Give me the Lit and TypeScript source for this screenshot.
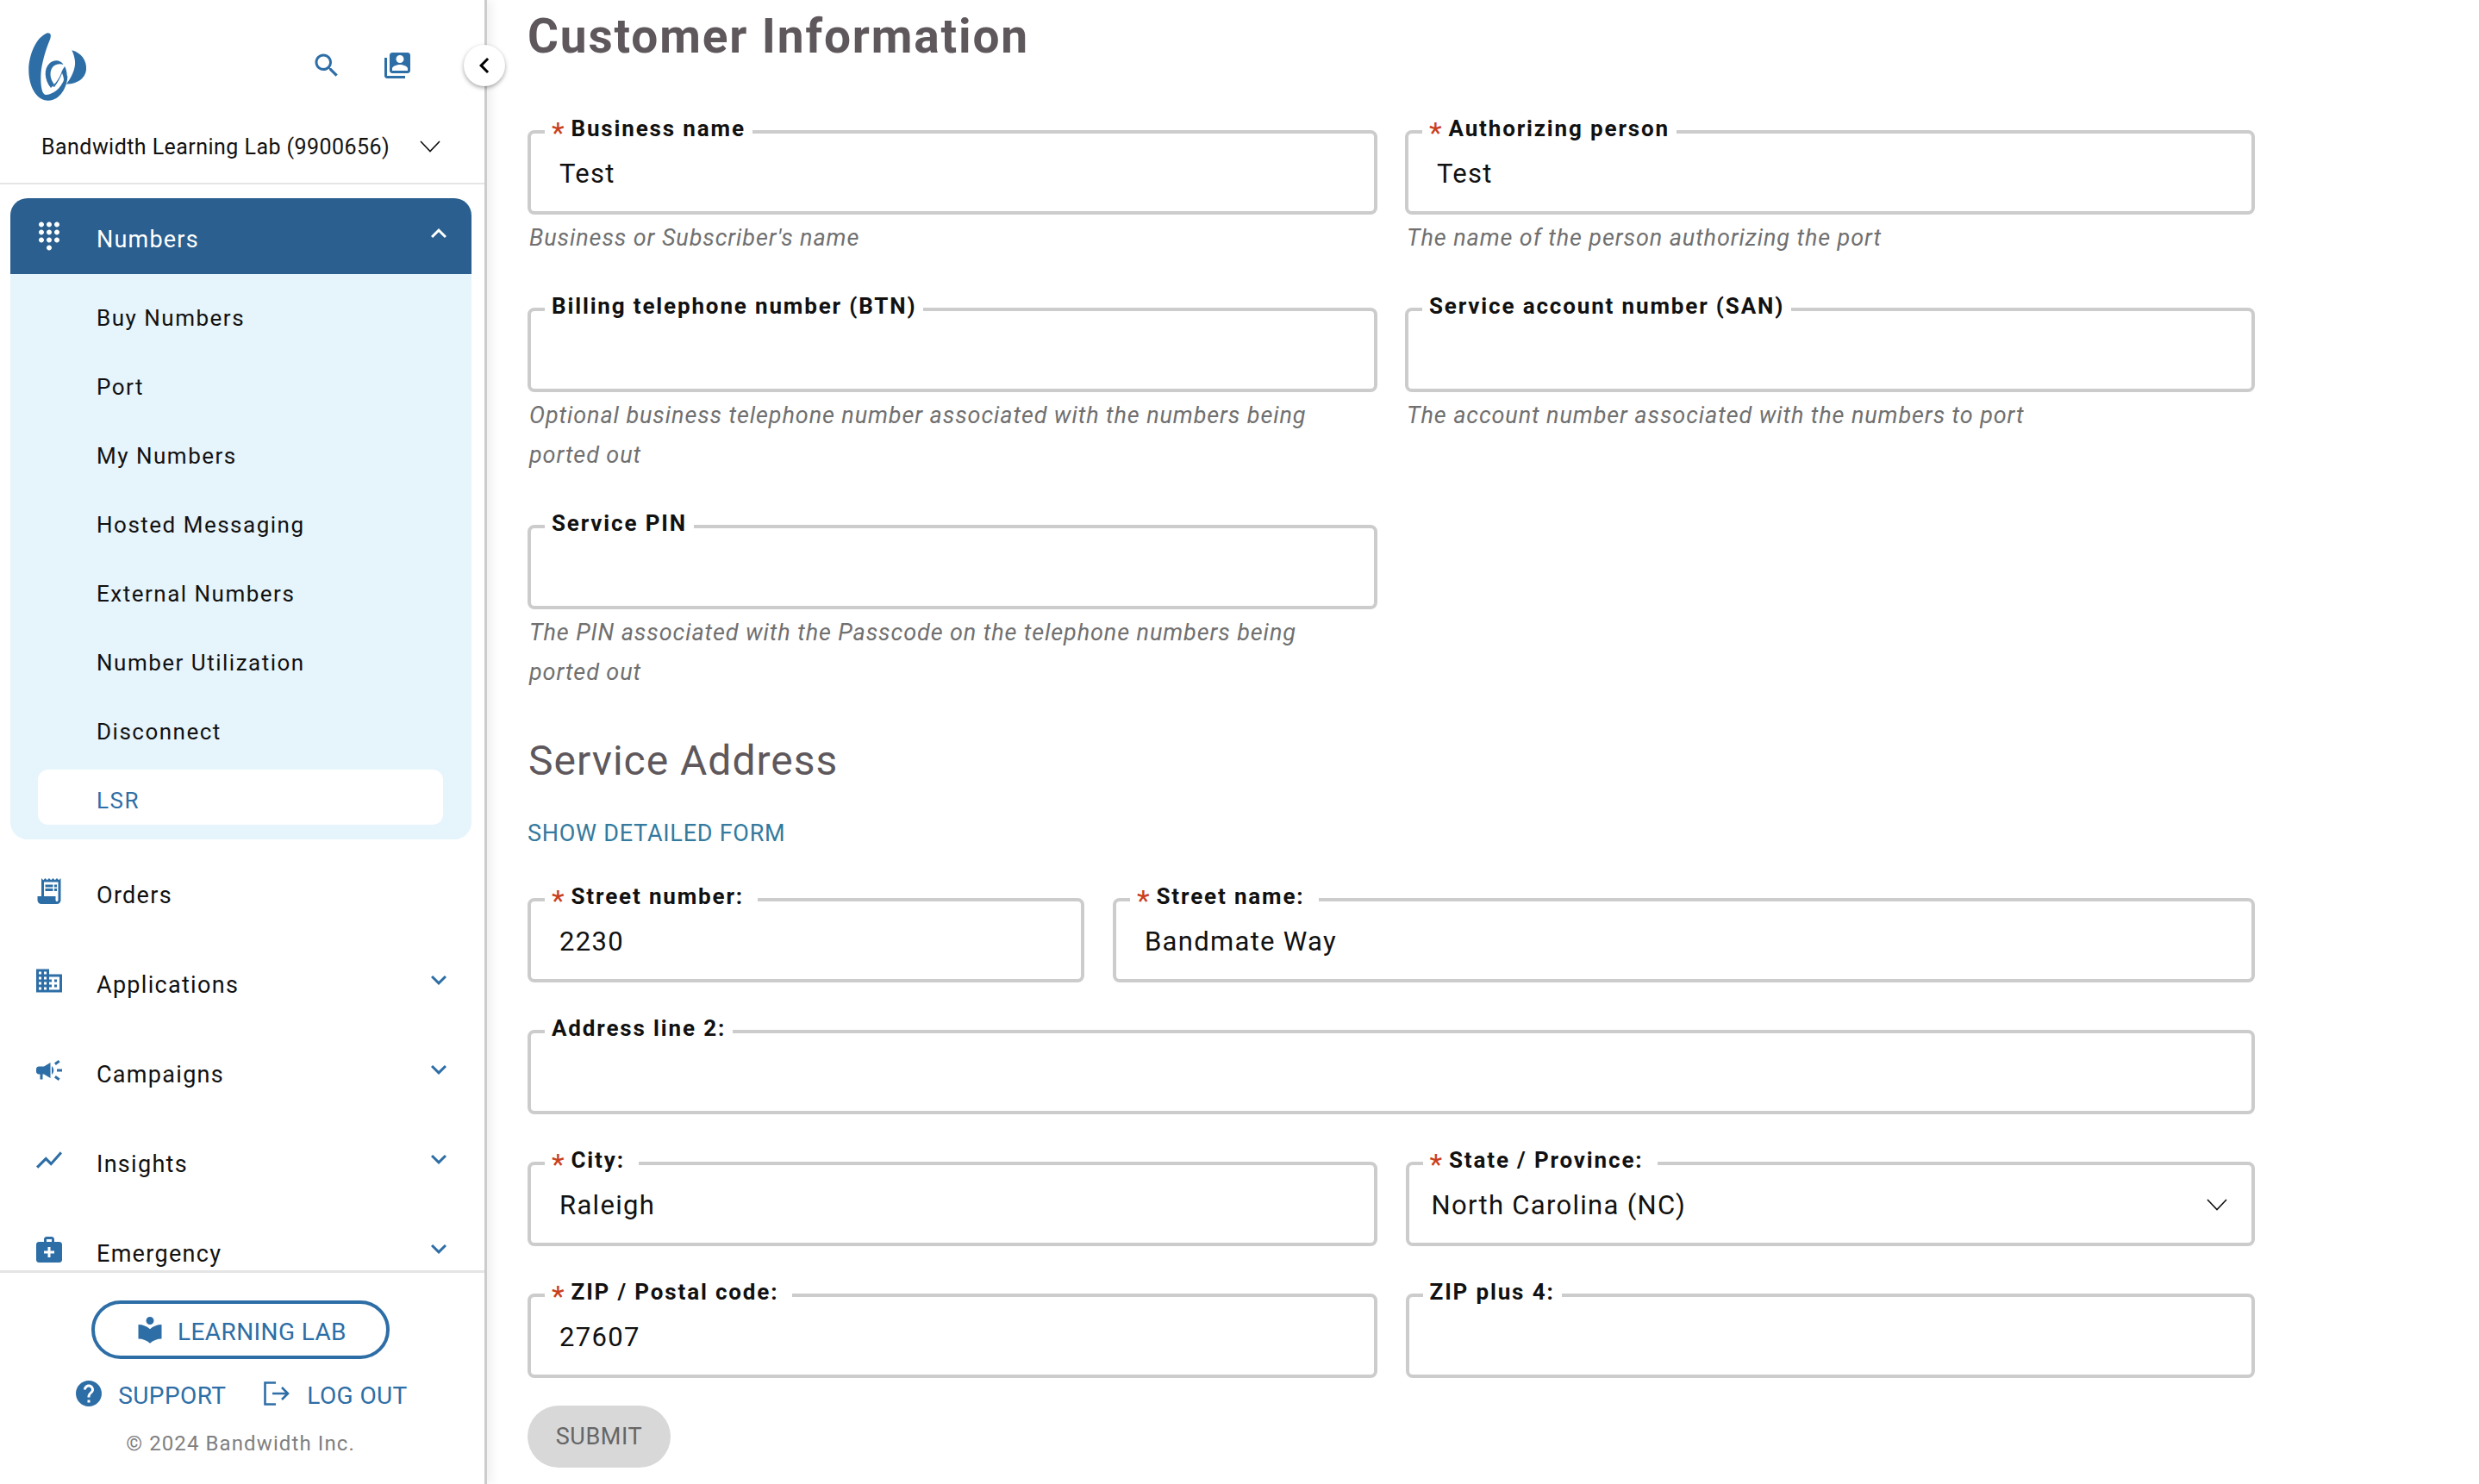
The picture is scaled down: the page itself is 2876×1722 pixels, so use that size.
import { LitElement, html, css, svg } from "lit";
import { customElement } from "lit/decorators.js";

const ICONS: Record<string, string> = {
  search: "M15.5 14h-.79l-.28-.27C15.41 12.59 16 11.11 16 9.5 16 5.91 13.09 3 9.5 3S3 5.91 3 9.5 5.91 16 9.5 16c1.61 0 3.09-.59 4.23-1.57l.27.28v.79l5 4.99L20.49 19l-4.99-5zm-6 0C7.01 14 5 11.99 5 9.5S7.01 5 9.5 5 14 7.01 14 9.5 11.99 14 9.5 14z",
  account: "M4 6H2v14c0 1.1.9 2 2 2h14v-2H4V6zm16-4H8c-1.1 0-2 .9-2 2v12c0 1.1.9 2 2 2h12c1.1 0 2-.9 2-2V4c0-1.1-.9-2-2-2zm-6 2c1.66 0 3 1.34 3 3s-1.34 3-3 3-3-1.34-3-3 1.34-3 3-3zM8 16v-1.5c0-2 4-3.1 6-3.1s6 1.1 6 3.1V16H8z",
  dialpad: "M12 19c-1.1 0-2 .9-2 2s.9 2 2 2 2-.9 2-2-.9-2-2-2zM6 1c-1.1 0-2 .9-2 2s.9 2 2 2 2-.9 2-2-.9-2-2-2zm0 6c-1.1 0-2 .9-2 2s.9 2 2 2 2-.9 2-2-.9-2-2-2zm0 6c-1.1 0-2 .9-2 2s.9 2 2 2 2-.9 2-2-.9-2-2-2zm12-8c1.1 0 2-.9 2-2s-.9-2-2-2-2 .9-2 2 .9 2 2 2zm-6 8c-1.1 0-2 .9-2 2s.9 2 2 2 2-.9 2-2-.9-2-2-2zm6 0c-1.1 0-2 .9-2 2s.9 2 2 2 2-.9 2-2-.9-2-2-2zm0-6c-1.1 0-2 .9-2 2s.9 2 2 2 2-.9 2-2-.9-2-2-2zm-6 0c-1.1 0-2 .9-2 2s.9 2 2 2 2-.9 2-2-.9-2-2-2zm0-6c-1.1 0-2 .9-2 2s.9 2 2 2 2-.9 2-2-.9-2-2-2z",
  orders: "M19.5 3.5 18 2l-1.5 1.5L15 2l-1.5 1.5L12 2l-1.5 1.5L9 2 7.5 3.5 6 2v14H3v3c0 1.66 1.34 3 3 3h12c1.66 0 3-1.34 3-3V2l-1.5 1.5zM19 19c0 .55-.45 1-1 1s-1-.45-1-1v-3H8V5h11v14zM9 7h6v2H9zm7 0h2v2h-2zm-7 3h6v2H9zm7 0h2v2h-2z",
  domain: "M12 7V3H2v18h20V7H12zM6 19H4v-2h2v2zm0-4H4v-2h2v2zm0-4H4V9h2v2zm0-4H4V5h2v2zm4 12H8v-2h2v2zm0-4H8v-2h2v2zm0-4H8V9h2v2zm0-4H8V5h2v2zm10 12h-8v-2h2v-2h-2v-2h2v-2h-2V9h8v10zm-2-8h-2v2h2v-2zm0 4h-2v2h2v-2z",
  campaign: "M18 11v2h4v-2h-4zm-2 6.61c.96.71 2.21 1.65 3.2 2.39.4-.53.8-1.07 1.2-1.6-.99-.74-2.24-1.68-3.2-2.4-.4.54-.8 1.08-1.2 1.61zM20.4 5.6c-.4-.53-.8-1.07-1.2-1.6-.99.74-2.24 1.68-3.2 2.4.4.53.8 1.07 1.2 1.6.96-.72 2.21-1.65 3.2-2.4zM4 9c-1.1 0-2 .9-2 2v2c0 1.1.9 2 2 2h1v4h2v-4h1l5 3V6L8 9H4zm11.5 3c0-1.33-.58-2.53-1.5-3.35v6.69c.92-.81 1.5-2.01 1.5-3.34z",
  chart: "M3.5 18.49l6-6.01 4 4L22 6.92l-1.41-1.41-7.09 7.97-4-4L2 16.99z",
  medical: "M20 6h-4V4c0-1.1-.9-2-2-2h-4c-1.1 0-2 .9-2 2v2H4c-1.1 0-2 .9-2 2v12c0 1.1.9 2 2 2h16c1.1 0 2-.9 2-2V8c0-1.1-.9-2-2-2zM10 4h4v2h-4V4zm6 11h-3v3h-2v-3H8v-2h3v-3h2v3h3v2z",
  down: "M16.59 8.59 12 13.17 7.41 8.59 6 10l6 6 6-6z",
  up: "M12 8l-6 6 1.41 1.41L12 10.83l4.59 4.58L18 14z",
  left: "M15.41 7.41 14 6l-6 6 6 6 1.41-1.41L10.83 12z",
  library: "M12 11.55C9.64 9.35 6.48 8 3 8v11c3.48 0 6.64 1.35 9 3.55 2.36-2.19 5.52-3.55 9-3.55V8c-3.48 0-6.64 1.35-9 3.55zM12 8c1.66 0 3-1.34 3-3s-1.34-3-3-3-3 1.34-3 3 1.34 3 3 3z",
  help: "M12 2C6.48 2 2 6.48 2 12s4.48 10 10 10 10-4.48 10-10S17.52 2 12 2zm1 17h-2v-2h2v2zm2.07-7.75-.9.92C13.45 12.9 13 13.5 13 15h-2v-.5c0-1.1.45-2.1 1.17-2.83l1.24-1.26c.37-.36.59-.86.59-1.41 0-1.1-.9-2-2-2s-2 .9-2 2H8c0-2.21 1.79-4 4-4s4 1.79 4 4c0 .88-.36 1.68-.93 2.25z",
};

const icon = (name: string, cls = "") => html`<svg class="ico ${cls}" viewBox="0 0 24 24" fill="currentColor">${svg`<path d=${ICONS[name]}></path>`}</svg>`;

const SUB = ["Buy Numbers", "Port", "My Numbers", "Hosted Messaging", "External Numbers", "Number Utilization", "Disconnect"];
const NAV = [
  { label: "Orders", ic: "orders", exp: false },
  { label: "Applications", ic: "domain", exp: true },
  { label: "Campaigns", ic: "campaign", exp: true },
  { label: "Insights", ic: "chart", exp: true },
  { label: "Emergency", ic: "medical", exp: true },
];

interface FieldOpts { label: string; value?: string; req?: boolean; hint?: string; select?: boolean; }

@customElement("app-root")
export class AppRoot extends LitElement {
  static styles = css`
    :host { display: flex; height: 1722px; width: 2876px; overflow: hidden; background: #fff; font-family: "Roboto", "Liberation Sans", sans-serif; color: #111; position: relative; }
    * { box-sizing: border-box; }
    .ico { display: block; flex: none; width: 36px; height: 36px; }

    .side { flex: none; width: 565px; height: 1722px; border-right: 3px solid #ccc; display: flex; flex-direction: column; position: relative; background: #fff; box-shadow: 6px 0 10px rgba(0,0,0,.06); z-index: 1; }
    .top { flex: none; height: 214px; border-bottom: 2px solid #e5e5e5; position: relative; }
    .toprow { display: flex; align-items: flex-start; height: 145px; padding: 38px 0 0 32px; }
    .logo { width: 70px; height: 80px; flex: none; color: #2e6ea6; }
    .tools { display: flex; margin-left: 259px; margin-top: 20px; gap: 46px; color: #2e6ea6; }
    .collapse { position: absolute; left: 538px; top: 52px; width: 48px; height: 48px; border-radius: 50%; background: #fff; box-shadow: 0 2px 5px rgba(0,0,0,.35); display: flex; align-items: center; justify-content: center; color: #000; z-index: 3; }
    .acct { display: flex; align-items: center; padding-left: 48px; height: 50px; font-size: 25px; letter-spacing: .45px; color: #111; }
    .acct svg { margin-left: 35px; width: 24px; height: 14px; }

    .nav { flex: 1; min-height: 0; overflow: hidden; padding: 16px 15px 0 12px; }
    .open { background: #e6f4fc; border-radius: 20px; padding-bottom: 17px; margin-bottom: 11px; }
    .head { height: 88px; background: #2a5f8f; color: #fff; border-radius: 20px 20px 0 0; display: flex; align-items: center; font-size: 27px; letter-spacing: 1.2px; padding-left: 27px; margin-bottom: 11px; }
    .head .lab { margin-left: 37px; flex: 1; padding-top: 7px; }
    .head .chev { margin-right: 20px; margin-top: -6px; }
    .sub { display: flex; align-items: center; height: 80px; padding-left: 100px; font-size: 26px; letter-spacing: 1.5px; }
    .sub.act { height: 64px; margin: 4px 33px 0 32px; padding: 7px 0 0 68px; background: #fff; border-radius: 12px; color: #2e6ea6; }
    .item { display: flex; align-items: center; height: 104px; padding-left: 27px; font-size: 27px; letter-spacing: 1.3px; color: #111; }
    .item .iic { color: #2e6ea6; margin-top: -6px; }
    .item .lab { margin-left: 37px; flex: 1; padding-top: 4px; }
    .item .chev { color: #2e6ea6; margin-right: 20px; margin-top: -8px; }

    .foot { flex: none; height: 248px; border-top: 3px solid #e5e5e5; display: flex; flex-direction: column; align-items: center; color: #2e6ea6; padding-right: 4px; }
    .lablink { margin-top: 32px; width: 346px; height: 68px; border: 4px solid #2e6ea6; border-radius: 34px; display: flex; align-items: center; justify-content: center; gap: 14px; font-size: 28px; letter-spacing: .4px; }
    .lablink span { padding-top: 4px; }
    .links { display: flex; align-items: center; margin-top: 22px; font-size: 28px; letter-spacing: .4px; height: 36px; }
    .links span { padding-top: 4px; }
    .links .a { display: flex; align-items: center; gap: 16px; }
    .links .b { display: flex; align-items: center; gap: 20px; margin-left: 44px; }
    .links .b svg { width: 30px; height: 28px; }
    .copy { margin-top: 26px; font-size: 24px; color: #808080; letter-spacing: 1.1px; }

    .main { flex: 1; padding: 0 260px 0 47px; min-width: 0; }
    h1 { margin: 0; font-size: 55px; font-weight: 700; color: #5e585c; letter-spacing: 1.85px; line-height: 70px; height: 151px; padding-top: 7px; }
    .grid { display: grid; grid-template-columns: 1fr 1fr; column-gap: 32px; row-gap: 58px; }
    .field { position: relative; height: 98px; border: 4px solid #ccc; border-radius: 8px; display: flex; align-items: center; padding: 2px 0 0 33px; font-size: 31px; letter-spacing: 1.3px; color: #111; }
    .field.sel { padding-left: 26px; justify-content: space-between; }
    .field.sel svg { margin-right: 28px; width: 24px; height: 14px; }
    .lbl { position: absolute; left: 16px; top: -25px; height: 38px; line-height: 38px; padding: 0 8px; background: #fff; font-size: 26px; font-weight: 700; letter-spacing: 1.85px; color: #111; white-space: nowrap; }
    .lbl.req { padding-right: 16px; }
    .lbl i { font-style: normal; font-weight: 400; color: #c9401e; font-size: 34px; line-height: 0; margin-right: 6px; vertical-align: -8px; }
    .hint { margin-top: 4px; max-width: 950px; font-size: 27px; line-height: 46px; font-style: italic; color: #707070; letter-spacing: .9px; padding-left: 2px; }
    h2 { margin: 50px 0 0; font-size: 48px; font-weight: 400; line-height: 60px; color: #5e585c; letter-spacing: 1px; padding-left: 1px; }
    .show { margin-top: 34px; font-size: 27px; line-height: 40px; letter-spacing: .75px; color: #337a9e; }
    .rows { margin-top: 55px; display: flex; flex-direction: column; gap: 55px; }
    .row { display: flex; gap: 33px; }
    .row .grow { flex: 1; }
    .row .num { width: 646px; }
    button { all: unset; box-sizing: border-box; display: flex; align-items: center; justify-content: center; margin-top: 32px; width: 166px; height: 72px; border-radius: 36px; background: #d8d8d8; color: #666; font-family: inherit; font-size: 27px; letter-spacing: .6px; }
  `;

  private field(f: FieldOpts, cls = "") {
    const colon = f.req && f.label.endsWith(":");
    return html`<div class=${cls}>
      <div class="field ${f.select ? "sel" : ""}">
        <div class="lbl ${colon ? "req" : ""}">${f.req ? html`<i>*</i>` : ""}${f.label}</div>
        ${f.value ?? ""}
        ${f.select ? html`<svg viewBox="0 0 24 14" fill="none" stroke="#111" stroke-width="1.6"><path d="M1 1l11 11.5L23 1"></path></svg>` : ""}
      </div>
      ${f.hint ? html`<div class="hint">${f.hint}</div>` : ""}
    </div>`;
  }

  render() {
    return html`
      <aside class="side">
        <div class="top">
          <div class="toprow">
            <svg class="logo" viewBox="0 0 70 80" fill="currentColor">
              <path d="M23 .3C27 0 27.5 3 26.3 7C22 17 18 30 16 42C14.5 55 15.5 72 21.3 72C28 72 39 66 43 52L46.3 50C46.5 62 38 78.7 24 78.7C10 78.7 1 62 1.3 42C1.8 25 10 5 23 .3Z"></path>
              <path d="M41.5 37C38 31 30 31 25 36C19 42 19 54 27 64L31 60C26 54 25 45 29 40C32 36.5 37 35.5 41.5 37Z"></path>
              <path d="M29 62C34 57 37 52 39 47C40 43 42 41 43 39C45 42 46 48 46 55L42 55C42 52 41 49 40 47C38 52 35 58 31 63Z"></path>
              <path d="M51.3 20.3C62 23 69 32 68 43C67 53 57 60 45 59.5C50 53 56 42 55 33C54.5 28 53 24 51.3 20.3Z"></path>
            </svg>
            <div class="tools">${icon("search")}${icon("account")}</div>
          </div>
          <div class="acct">Bandwidth Learning Lab (9900656)
            <svg viewBox="0 0 24 14" fill="none" stroke="#111" stroke-width="1.6"><path d="M1 1l11 11.5L23 1"></path></svg>
          </div>
          <div class="collapse">${icon("left")}</div>
        </div>
        <div class="nav">
          <div class="open">
            <div class="head">${icon("dialpad")}<span class="lab">Numbers</span>${icon("up", "chev")}</div>
            ${SUB.map((s) => html`<div class="sub">${s}</div>`)}
            <div class="sub act">LSR</div>
          </div>
          ${NAV.map((n) => html`<div class="item">${icon(n.ic, "iic")}<span class="lab">${n.label}</span>${n.exp ? icon("down", "chev") : ""}</div>`)}
        </div>
        <div class="foot">
          <div class="lablink">${icon("library")}<span>LEARNING LAB</span></div>
          <div class="links">
            <div class="a">${icon("help")}<span>SUPPORT</span></div>
            <div class="b">
              <svg viewBox="0 0 30 28" fill="none" stroke="currentColor" stroke-width="2.6"><path d="M14 1.5H1.5V26.5H14M10 14H28M21 7l7 7-7 7"></path></svg>
              <span>LOG OUT</span>
            </div>
          </div>
          <div class="copy">© 2024 Bandwidth Inc.</div>
        </div>
      </aside>
      <main class="main">
        <h1>Customer Information</h1>
        <div class="grid">
          ${this.field({ label: "Business name", req: true, value: "Test", hint: "Business or Subscriber's name" })}
          ${this.field({ label: "Authorizing person", req: true, value: "Test", hint: "The name of the person authorizing the port" })}
          ${this.field({ label: "Billing telephone number (BTN)", hint: "Optional business telephone number associated with the numbers being ported out" })}
          ${this.field({ label: "Service account number (SAN)", hint: "The account number associated with the numbers to port" })}
          ${this.field({ label: "Service PIN", hint: "The PIN associated with the Passcode on the telephone numbers being ported out" })}
        </div>
        <h2>Service Address</h2>
        <div class="show">SHOW DETAILED FORM</div>
        <div class="rows">
          <div class="row">
            ${this.field({ label: "Street number:", req: true, value: "2230" }, "num")}
            ${this.field({ label: "Street name:", req: true, value: "Bandmate Way" }, "grow")}
          </div>
          <div class="row">${this.field({ label: "Address line 2:" }, "grow")}</div>
          <div class="row">
            ${this.field({ label: "City:", req: true, value: "Raleigh" }, "grow")}
            ${this.field({ label: "State / Province:", req: true, value: "North Carolina (NC)", select: true }, "grow")}
          </div>
          <div class="row">
            ${this.field({ label: "ZIP / Postal code:", req: true, value: "27607" }, "grow")}
            ${this.field({ label: "ZIP plus 4:" }, "grow")}
          </div>
        </div>
        <button>SUBMIT</button>
      </main>
    `;
  }
}
